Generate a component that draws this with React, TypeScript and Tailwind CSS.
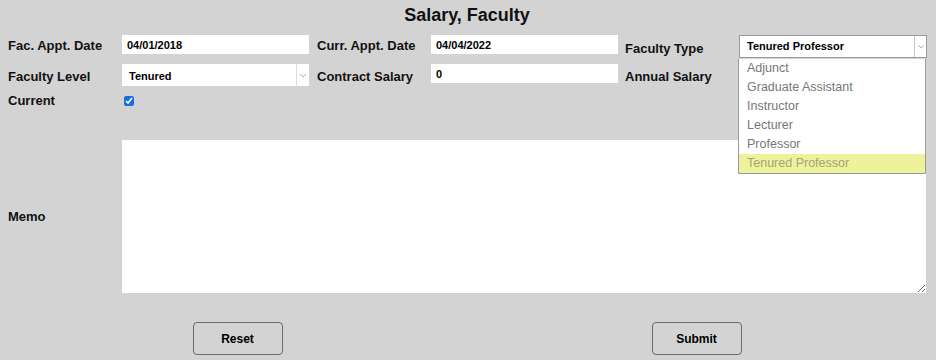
import { useState } from 'react'

const font = { fontFamily: '"Liberation Sans", Arial, sans-serif' }

const facultyTypes = ['Adjunct', 'Graduate Assistant', 'Instructor', 'Lecturer', 'Professor', 'Tenured Professor']

function Label({ children, className = '' }: { children: React.ReactNode; className?: string }) {
    return (
        <div className={`w-[114px] shrink-0 text-[13px] font-bold text-[#111] ${className}`} style={font}>
            {children}
        </div>
    )
}

function TextInput({ value }: { value: string }) {
    return (
        <input
            type="text"
            defaultValue={value}
            className="h-[19px] w-[187px] shrink-0 bg-white px-[5px] text-[11px] font-bold text-black outline-none"
            style={font}
        />
    )
}

function Chevron() {
    return (
        <svg width="8" height="5" viewBox="0 0 8 5" className="text-[#b0b0b0]">
            <path d="M1 1l3 3 3-3" fill="none" stroke="currentColor" strokeWidth="1" />
        </svg>
    )
}

export default function App() {
    const [current, setCurrent] = useState(true)
    const [facultyType, setFacultyType] = useState('Tenured Professor')

    return (
        <div className="relative h-[360px] w-[936px] overflow-hidden bg-[#d3d3d3] pl-2 pr-[10px]" style={font}>
            <h1 className="flex h-[35px] items-center justify-center pb-[5px] text-[18px] font-bold text-[#111]">
                Salary, Faculty
            </h1>

            {/* Row 1 */}
            <div className="flex h-[23px] items-start">
                <Label className="mt-[1px]">Fac. Appt. Date</Label>
                <TextInput value="04/01/2018" />
                <div className="w-[8px] shrink-0" />
                <Label className="mt-[1px]">Curr. Appt. Date</Label>
                <TextInput value="04/04/2022" />
                <div className="w-[7px] shrink-0" />
                <Label className="mt-[4px] w-[113px]">Faculty Type</Label>
                <div className="flex h-[23px] w-[188px] shrink-0 items-center border border-[#9a9a9a] bg-white">
                    <span className="flex-1 pl-[7px] text-[11px] font-bold text-black">{facultyType}</span>
                    <span className="flex h-full w-[12px] items-center justify-center border-l border-[#c8c8c8]">
                        <Chevron />
                    </span>
                </div>
            </div>

            {/* Row 2 */}
            <div className="mt-[6px] flex h-[22px] items-start">
                <Label className="mt-[3px]">Faculty Level</Label>
                <div className="flex h-[22px] w-[187px] shrink-0 items-center bg-white">
                    <span className="flex-1 pl-[7px] pt-[2px] text-[11px] font-bold text-black">Tenured</span>
                    <span className="flex h-full w-[13px] items-center justify-center border-l border-[#dcdcdc]">
                        <Chevron />
                    </span>
                </div>
                <div className="w-[8px] shrink-0" />
                <Label className="mt-[3px]">Contract Salary</Label>
                <TextInput value="0" />
                <div className="w-[7px] shrink-0" />
                <Label className="mt-[3px] w-[113px]">Annual Salary</Label>
            </div>

            {/* Row 3 */}
            <div className="mt-[6px] flex h-[18px] items-center">
                <Label>Current</Label>
                <input
                    type="checkbox"
                    checked={current}
                    onChange={(e) => setCurrent(e.target.checked)}
                    className="ml-[2px] h-[10px] w-[10px] accent-[#1a6be0]"
                />
            </div>

            {/* Memo */}
            <div className="mt-[30px] flex h-[153px] items-center">
                <Label>Memo</Label>
                <textarea className="h-full flex-1 resize-y bg-white p-1 text-[12px] outline-none" />
            </div>

            {/* Buttons */}
            <div className="mt-[29px] flex">
                <div className="flex flex-1 justify-center">
                    <button className="h-[33px] w-[90px] rounded-[4px] border border-[#6b6b6b] bg-[#d3d3d3] text-[12px] font-bold text-black">
                        Reset
                    </button>
                </div>
                <div className="flex flex-1 justify-center">
                    <button className="h-[33px] w-[90px] rounded-[4px] border border-[#6b6b6b] bg-[#d3d3d3] text-[12px] font-bold text-black">
                        Submit
                    </button>
                </div>
            </div>

            {/* Faculty type dropdown (open) */}
            <ul className="absolute left-[738px] top-[59px] w-[188px] border border-t-0 border-[#9a9a9a] bg-white">
                {facultyTypes.map((t) => (
                    <li
                        key={t}
                        onClick={() => setFacultyType(t)}
                        className={`flex h-[19px] items-center pl-[8px] text-[12.5px] ${
                            t === facultyType ? 'bg-[#eef39b] text-[#a3a37a]' : 'text-[#777]'
                        }`}
                    >
                        {t}
                    </li>
                ))}
            </ul>
        </div>
    )
}
